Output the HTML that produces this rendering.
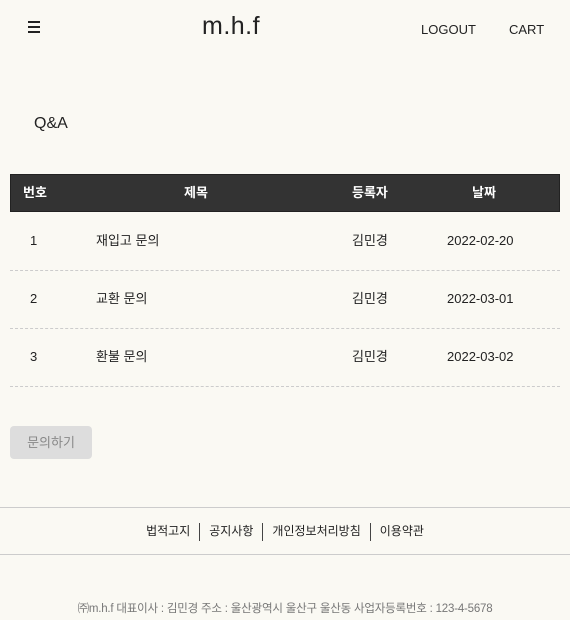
<!DOCTYPE html>
<html><head><meta charset="utf-8"><style>
*{margin:0;padding:0;box-sizing:border-box}
body{width:570px;height:620px;background:#faf9f3;font-family:"Liberation Sans","Noto Sans CJK KR",sans-serif;color:#222;position:relative;overflow:hidden}
.a{position:absolute;white-space:nowrap}
.hd{position:absolute;left:10px;top:174px;width:550px;height:38px;background:#333;border:1px solid #222}
.hd span{position:absolute;top:10px;line-height:16px;color:#fff;font-size:13px;font-weight:bold}
.row{position:absolute;left:10px;width:550px;height:58px;border-bottom:1px dashed #ccc;font-size:13px}
.row span{position:absolute;top:20px;line-height:16px;height:16px}
.sep{display:inline-block;width:1px;height:18px;background:#444;vertical-align:middle;margin:0 9px}
</style></head><body>
<div class="a" style="left:28px;top:21px;width:12px;height:2px;background:#222"></div>
<div class="a" style="left:28px;top:26px;width:12px;height:2px;background:#222"></div>
<div class="a" style="left:28px;top:31px;width:12px;height:2px;background:#222"></div>
<div class="a" style="left:202px;top:12px;font-size:25px;letter-spacing:0.5px">m.h.f</div>
<div class="a" style="left:421px;top:22px;font-size:13px">LOGOUT</div>
<div class="a" style="left:509px;top:22px;font-size:13px">CART</div>
<div class="a" style="left:34px;top:115px;font-size:16px">Q&amp;A</div>
<div class="hd"><span style="left:12px">번호</span><span style="left:173px">제목</span><span style="left:341px">등록자</span><span style="left:461px">날짜</span></div>
<div class="row" style="top:213px"><span style="left:20px">1</span><span style="left:86px">재입고 문의</span><span style="left:342px">김민경</span><span style="left:437px">2022-02-20</span></div>
<div class="row" style="top:271px"><span style="left:20px">2</span><span style="left:86px">교환 문의</span><span style="left:342px">김민경</span><span style="left:437px">2022-03-01</span></div>
<div class="row" style="top:329px"><span style="left:20px">3</span><span style="left:86px">환불 문의</span><span style="left:342px">김민경</span><span style="left:437px">2022-03-02</span></div>
<div class="a" style="left:10px;top:426px;width:82px;height:33px;background:#ddd;border-radius:4px;color:#888;font-size:13px;text-align:center;line-height:33px">문의하기</div>
<div class="a" style="left:0;top:507px;width:570px;height:48px;border-top:1px solid #ccc;border-bottom:1px solid #ccc;font-size:12px;text-align:center;line-height:46px">법적고지<span class="sep"></span>공지사항<span class="sep"></span>개인정보처리방침<span class="sep"></span>이용약관</div>
<div class="a" style="left:0;top:600px;width:570px;text-align:center;font-size:11.5px;color:#777;letter-spacing:-0.2px">㈜m.h.f 대표이사 : 김민경 주소 : 울산광역시 울산구 울산동 사업자등록번호 : 123-4-5678</div>
</body></html>
